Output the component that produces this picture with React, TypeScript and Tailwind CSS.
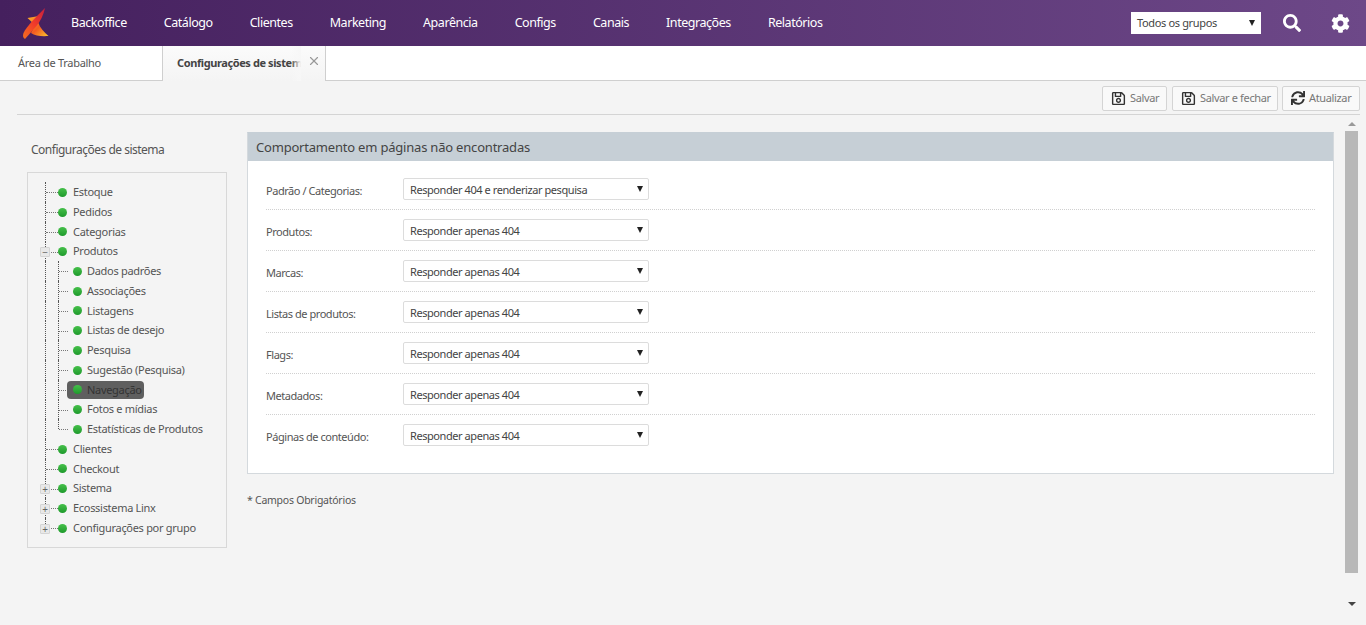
import { FaCog, FaRegSave, FaSearch, FaSync } from "react-icons/fa";
import { X } from "lucide-react";

const menu = ["Backoffice", "Catálogo", "Clientes", "Marketing", "Aparência", "Configs", "Canais", "Integrações", "Relatórios"];

const fields = [
  { label: "Padrão / Categorias:", value: "Responder 404 e renderizar pesquisa" },
  { label: "Produtos:", value: "Responder apenas 404" },
  { label: "Marcas:", value: "Responder apenas 404" },
  { label: "Listas de produtos:", value: "Responder apenas 404" },
  { label: "Flags:", value: "Responder apenas 404" },
  { label: "Metadados:", value: "Responder apenas 404" },
  { label: "Páginas de conteúdo:", value: "Responder apenas 404" },
];

type TreeItem = { label: string; toggle?: "+" | "-"; active?: boolean; child?: boolean; last?: boolean };

const tree: TreeItem[] = [
  { label: "Estoque" },
  { label: "Pedidos" },
  { label: "Categorias" },
  { label: "Produtos", toggle: "-" },
  { label: "Dados padrões", child: true },
  { label: "Associações", child: true },
  { label: "Listagens", child: true },
  { label: "Listas de desejo", child: true },
  { label: "Pesquisa", child: true },
  { label: "Sugestão (Pesquisa)", child: true },
  { label: "Navegação", child: true, active: true },
  { label: "Fotos e mídias", child: true },
  { label: "Estatísticas de Produtos", child: true, last: true },
  { label: "Clientes" },
  { label: "Checkout" },
  { label: "Sistema", toggle: "+" },
  { label: "Ecossistema Linx", toggle: "+" },
  { label: "Configurações por grupo", toggle: "+", last: true },
];

function Logo() {
  return (
    <svg width="32" height="36" viewBox="0 0 32 36" className="ml-[20px] mt-[6px]">
      <defs>
        <linearGradient id="logoA" x1="0" y1="1" x2="1" y2="0">
          <stop offset="0" stopColor="#f4701f" />
          <stop offset="0.5" stopColor="#f03a2a" />
          <stop offset="1" stopColor="#c3203f" />
        </linearGradient>
        <linearGradient id="logoB" x1="0" y1="0" x2="1" y2="1">
          <stop offset="0" stopColor="#fbb02d" />
          <stop offset="0.55" stopColor="#f25c22" />
          <stop offset="1" stopColor="#fdc52c" />
        </linearGradient>
      </defs>
      <path d="M7.500 12 L19 10 L18 16 C20 22 24 26 28.500 30 C22 30.500 15 30 11 27 L15 19 Z" fill="url(#logoB)" />
      <path d="M25 2 C23.500 9 20.500 15 16.500 20 L5 33 Q2 31 3.500 27 C7 20 14 13 25 2 Z" fill="url(#logoA)" />
    </svg>
  );
}

function Select({ value }: { value: string }) {
  return (
    <div className="flex h-[22px] w-[246px] items-center justify-between rounded-[2px] border border-[#dcdcdc] bg-white pl-[6px] pr-[4px] text-[11px] tracking-[-0.43px] text-[#444]">
      <span className="pt-[3px]">{value}</span>
      <span className="mr-[1px] h-0 w-0 border-x-[3.500px] border-t-[6px] border-x-transparent border-t-[#222]" />
    </div>
  );
}

function ToolButton({ icon, label, width }: { icon: React.ReactNode; label: string; width: string }) {
  return (
    <div className={`flex h-[25px] items-center gap-[4px] rounded-[2px] border border-[#d4d4d4] bg-[#f9f9f9] pl-[8px] text-[11px] tracking-[-0.35px] text-[#777] ${width}`}>
      <span className="text-[#333]">{icon}</span>
      {label}
    </div>
  );
}

function TreeRow({ item }: { item: TreeItem }) {
  return (
    <div className="relative flex h-[19.76px] items-center">
      {/* dotted connectors */}
      <span className={`absolute left-[17px] top-0 border-l border-dotted border-[#555] ${item.last && !item.child ? "h-[10px]" : "h-full"}`} />
      {item.child && (
        <>
          <span className={`absolute left-[30px] top-0 border-l border-dotted border-[#555] ${item.last ? "h-[10px]" : "h-full"}`} />
          <span className="absolute left-[31px] top-[10px] w-[9px] border-t border-dotted border-[#777]" />
        </>
      )}
      {!item.child && <span className="absolute left-[18px] top-[10px] w-[12px] border-t border-dotted border-[#777]" />}
      {item.toggle && (
        <span className="absolute left-[12px] top-[5.500px] flex h-[10px] w-[10px] items-center justify-center rounded-[1px] border border-[#d4d4d4] bg-[#e8e8e8] text-[10px] leading-none text-[#666]">
          {item.toggle === "+" ? "+" : "−"}
        </span>
      )}
      <div className={item.child ? "relative ml-[39px]" : "relative ml-[26px]"}>
        <div
          className={`flex h-[18px] items-center rounded-[4px] pr-[2px] ${item.child ? "gap-[5px] pl-[6px]" : "gap-[6px] pl-[4px]"} ${
            item.active ? "bg-[#5f5f5f]" : ""
          }`}
        >
          <span className="h-[9px] w-[9px] rounded-full bg-gradient-to-b from-[#45c04a] to-[#1d9a2c]" />
          <span className={`whitespace-nowrap text-[11px] tracking-[-0.3px] ${item.active ? "text-[#333]" : "text-[#555]"}`}>{item.label}</span>
        </div>
      </div>
    </div>
  );
}

export default function App() {
  return (
    <div className="flex h-[625px] w-[1366px] flex-col overflow-hidden bg-[#f4f4f4] font-['Noto_Sans',sans-serif]">
      {/* Top bar */}
      <header className="flex h-[46px] shrink-0 items-start bg-gradient-to-r from-[#45205e] to-[#6d4888]">
        <Logo />
        <nav className="ml-[19px] flex h-[46px] items-center gap-[37px] text-[12.500px] tracking-[-0.45px] text-white">
          {menu.map(item => (
            <span key={item}>{item}</span>
          ))}
        </nav>
        <div className="ml-auto flex h-[46px] items-center">
          <div className="flex h-[22px] w-[130px] items-center justify-between bg-white pl-[6px] pr-[6px] text-[11px] tracking-[-0.35px] text-[#444]">
            <span>Todos os grupos</span>
            <span className="h-0 w-0 border-x-[3.500px] border-t-[6px] border-x-transparent border-t-[#222]" />
          </div>
          <FaSearch className="ml-[22px] text-white" size={18} />
          <FaCog className="ml-[30px] mr-[16px] text-white" size={19} />
        </div>
      </header>

      {/* Tabs */}
      <div className="flex h-[35px] shrink-0 border-b border-[#cfcfcf] bg-white">
        <div className="flex w-[162px] items-center pl-[18px] text-[11px] tracking-[-0.3px] text-[#555]">Área de Trabalho</div>
        <div className="relative -mb-px flex w-[164px] items-center border-x border-[#cfcfcf] bg-gradient-to-b from-[#fbfbfb] to-[#f4f4f4] pl-[14px] text-[11px] font-bold tracking-[-0.4px] text-[#444]">
          <span className="w-[124px] overflow-hidden whitespace-nowrap">Configurações de sistema</span>
          <span className="absolute left-[128px] top-0 h-full w-[10px] bg-gradient-to-r from-transparent to-[#f7f7f7]" />
          <X className="absolute right-[4px] top-[8px] text-[#999]" size={14} />
        </div>
      </div>

      {/* Toolbar */}
      <div className="ml-[17px] mr-[6px] flex h-[34px] shrink-0 items-center justify-end gap-[4px] border-b border-[#d4d4d4] pt-[1px]">
        <ToolButton icon={<FaRegSave size={15} />} label="Salvar" width="mr-[1px] w-[65px]" />
        <ToolButton icon={<FaRegSave size={15} />} label="Salvar e fechar" width="w-[106px]" />
        <ToolButton icon={<FaSync size={14} />} label="Atualizar" width="w-[78px]" />
      </div>

      {/* Body */}
      <div className="flex min-h-0 flex-1">
        <aside className="ml-[27px] w-[200px] shrink-0">
          <h2 className="mt-[26px] pl-[4px] text-[12px] leading-[18px] tracking-[-0.5px] text-[#555]">Configurações de sistema</h2>
          <div className="mt-[13px] h-[376px] border border-[#d8d8d8] pt-[9.400px]">
            {tree.map(item => (
              <TreeRow key={item.label} item={item} />
            ))}
          </div>
        </aside>

        <main className="ml-[20px] w-[1087px] shrink-0 pt-[17px]">
          <section className="h-[342px] border border-[#d4d9dd] border-t-[#c6cfd6] bg-white">
            <h1 className="flex h-[28px] items-center bg-[#c6cfd6] pl-[8px] pt-[2px] text-[13px] tracking-[-0.2px] text-[#444]">Comportamento em páginas não encontradas</h1>
            <div className="px-[18px] pt-[8px]">
              {fields.map((f, i) => (
                <div key={f.label} className={`flex h-[41px] items-center ${i < fields.length - 1 ? "border-b border-dotted border-[#d0d0d0]" : ""}`}>
                  <label className="w-[137px] pt-[4px] text-[11px] tracking-[-0.45px] text-[#555]">{f.label}</label>
                  <div className="-mt-[1px]"><Select value={f.value} /></div>
                </div>
              ))}
            </div>
          </section>
          <p className="mt-[19px] text-[10.500px] tracking-[-0.25px] text-[#555]">* Campos Obrigatórios</p>
        </main>

        {/* Scrollbar */}
        <div className="ml-[9px] flex h-[497px] w-[17px] flex-col items-center">
          <span className="mt-[7px] h-0 w-0 border-x-[4px] border-b-[4px] border-x-transparent border-b-[#999]" />
          <span className="mt-[5px] h-[442px] w-[13px] bg-[#b8b8b8]" />
          <span className="mt-[29px] h-0 w-0 border-x-[4px] border-t-[4px] border-x-transparent border-t-[#444]" />
        </div>
      </div>
    </div>
  );
}
